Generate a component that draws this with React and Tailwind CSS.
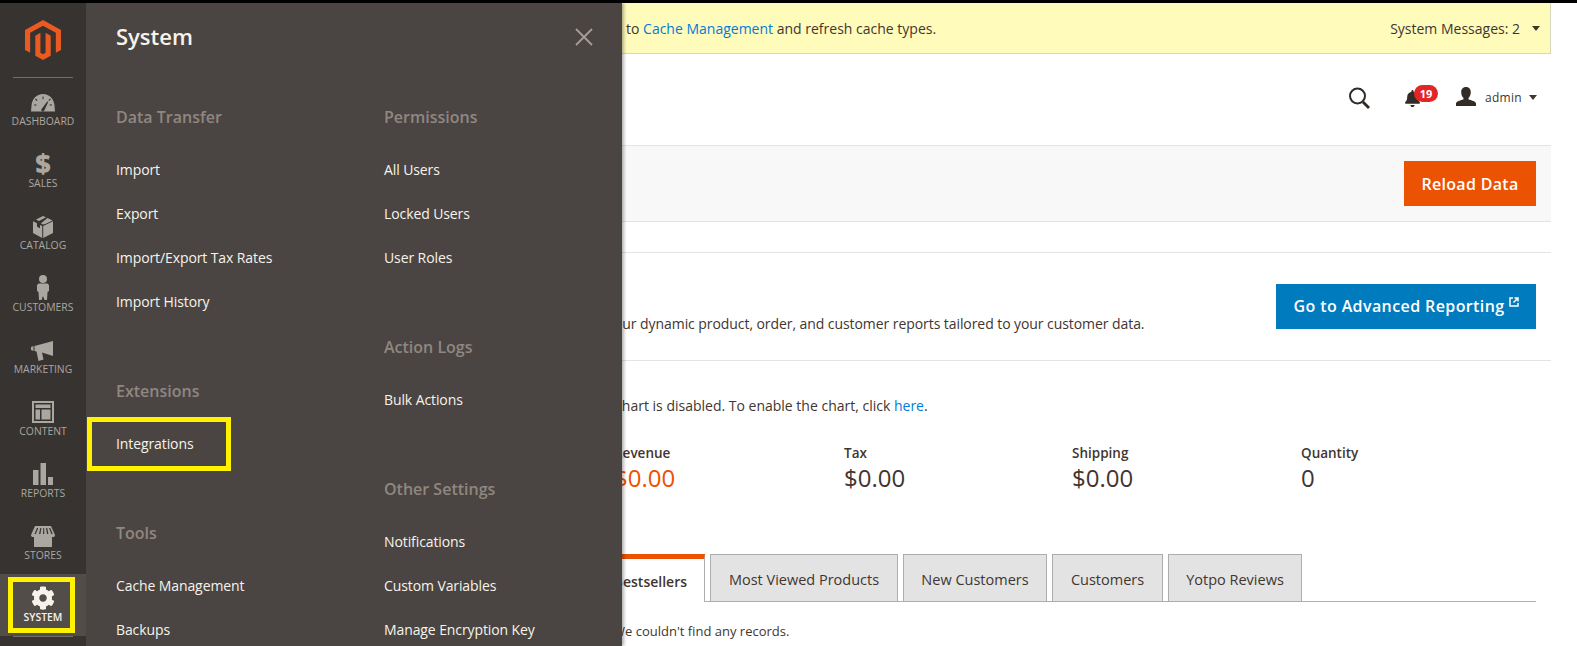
import React from "react";
import { FaCog, FaBell } from "react-icons/fa";

const font = { fontFamily: '"Open Sans", sans-serif' };

const Gauge = () => (
  <svg width="24" height="18" viewBox="0 0 24 18" fill="currentColor">
    <path fillRule="evenodd" d="M12 0C5.500 0 1 5 0.500 11.500L0 17.500h24l-.5-6C23 5 18.500 0 12 0zM5 4.500l1.500 1.800-.8.700L4 5.300zM11.500 2.500h1v2.800h-1zM19 4.500l.9.800-1.700 1.700-.8-.7zM3 10.500h2.500v1H3zM18.500 10.500H21v1h-2.500z" />
    <path d="M16.200 7.500l1 .4-3.700 8a1.600 1.600 0 1 1-2.500-1.400z" fill="#373330" />
  </svg>
);
const Dollar = () => (
  <span className="text-[27px] leading-[20px] font-extrabold -mt-[4px]" style={font}>$</span>
);
const Box = () => (
  <svg width="20" height="22" viewBox="0 0 20 22" fill="currentColor">
    <path d="M10 0l3 1.300L6 5 3 3.600zM14.500 2l5 2.400-7.200 3.500L10 8.600 8 7.600l-.2-.2zM0 5.300l4 2v3.500l3 1.500V8.900l2.200 1.200V22L0 17zM20 5.300V17l-9.800 5V10.100z" />
  </svg>
);
const Person = () => (
  <svg width="12" height="25" viewBox="0 0 12 25" fill="currentColor" className="-mt-[2px]">
    <circle cx="6" cy="4" r="4" />
    <path d="M1.500 8.500h9L12 10v6l-1.500 1-.5 8H7.500L6 21l-1.500 4H2l-.5-8L0 16v-6z" />
  </svg>
);
const Megaphone = () => (
  <svg width="24" height="20" viewBox="0 0 24 20" fill="currentColor">
    <path d="M0 6l2.500-1v5L0 9zM3.500 5L22 0v15L11 11.500l1.500 7-5 1.500-2-9.500-2-.5z" />
  </svg>
);
const Content = () => (
  <svg width="22" height="22" viewBox="0 0 22 22" fill="currentColor" className="-mt-[2px]">
    <path fillRule="evenodd" d="M0 0h22v22H0zM2 2v18h18V2zM3.500 3.500h15v3.500h-15zM3.500 8.500h4.500v10h-4.500zM9.500 8.500h9v10h-9z" />
  </svg>
);
const Bars = () => (
  <svg width="20" height="22" viewBox="0 0 20 22" fill="currentColor" className="-mt-[2px]">
    <path d="M0 7h5.500v15H0zM7.500 0H13v22H7.500zM15 14h5v8h-5z" />
  </svg>
);
const Store = () => (
  <svg width="24" height="21" viewBox="0 0 24 21" fill="currentColor">
    <path fillRule="evenodd" d="M4 0h16l4 9a2 2 0 0 1-2.500 2H21v10H3V11H2.500A2 2 0 0 1 0 9zM6 2L3.500 8h1.300L7.300 2zM9.300 2L8 8h1.400l1-6zM12.300 2l-.3 6h1.300l-.1-6zM15 2l1 6h1.400l-1.200-6zM18 2l2.400 6h1.300L19.300 2z" />
  </svg>
);

const navItems = [
  ["DASHBOARD", <Gauge />],
  ["SALES", <Dollar />],
  ["CATALOG", <Box />],
  ["CUSTOMERS", <Person />],
  ["MARKETING", <Megaphone />],
  ["CONTENT", <Content />],
  ["REPORTS", <Bars />],
  ["STORES", <Store />],
];

function Item({ children, boxed }) {
  return (
    <div className="relative h-[44px] flex items-center text-[14px] font-medium tracking-[-0.100px] text-[#f7f3eb]">
      {boxed && (
        <div className="absolute left-[-29px] top-[-4px] w-[144px] h-[54px] border-[5px] border-[#fff200]" />
      )}
      {children}
    </div>
  );
}

function Heading({ children }) {
  return (
    <div className="h-[44px] mb-[8px] flex items-center text-[16px] font-semibold text-[#8f8780]">
      {children}
    </div>
  );
}

function Tab({ children, width }) {
  return (
    <div
      className={`${width} h-[48px] pt-[3px] flex items-center justify-center mr-[5px] bg-[#e3e3e3] border-[1px] border-[#adadad] text-[14.500px] text-[#41362f]`}
    >
      {children}
    </div>
  );
}

function Stat({ label, value, accent, width }) {
  return (
    <div className={`${width} shrink-0`}>
      <div className="h-[20px] leading-[20px] text-[13.500px] font-semibold text-[#41362f]">{label}</div>
      <div className={`h-[30px] leading-[30px] text-[24px] ${accent ? "text-[#eb5202]" : "text-[#41362f]"}`}>
        {value}
      </div>
    </div>
  );
}

export default function App() {
  return (
    <div className="relative w-[1577px] h-[646px] overflow-hidden bg-white flex flex-col" style={font}>
      <div className="h-[3px] bg-black shrink-0" />
      <div className="flex flex-1 min-h-0">
        <aside className="w-[86px] shrink-0 bg-[#373330] flex flex-col">
          <div className="h-[75px] shrink-0 flex flex-col items-center">
            <svg className="mt-[17px]" width="36" height="40" viewBox="1.600 0 20.800 24" fill="#eb5a20" preserveAspectRatio="none">
              <path d="M12 24l-4.455-2.572v-12l2.970-1.715v12.001l1.485.902 1.485-.902V7.713l2.971 1.715v12L12 24zM22.391 6v12l-2.969 1.714V7.713L12 3.430 4.574 7.713v12.001L1.609 18V6L12 0l10.391 6z" />
            </svg>
            <div className="mt-auto w-[60px] h-px bg-[#736e69]" />
          </div>
          {navItems.map(([label, icon]) => (
            <div key={label} className="h-[62px] shrink-0 pt-[12px] flex flex-col items-center text-[#aaa6a0]">
              <div className="h-[25px] flex items-center justify-center">{icon}</div>
              <div className="h-[12px] leading-[12px] text-[10.400px]">{label}</div>
            </div>
          ))}
          <div className="relative h-[62px] shrink-0 pt-[11px] bg-[#524d49] flex flex-col items-center text-[#f7f3eb]">
            <div className="h-[25px] flex items-center justify-center">
              <FaCog size={24} />
            </div>
            <div className="h-[12px] mt-[1px] leading-[12px] text-[10.400px] font-semibold">SYSTEM</div>
            <div className="absolute left-[8px] top-[3px] w-[67px] h-[56px] border-[5px] border-[#fff200]" />
          </div>
          <div className="w-[60px] h-px bg-[#736e69] mx-auto" />
        </aside>

        <main className="flex-1 min-w-0 pr-[26px]">
          <div className="h-[51px] bg-[#fffbbb] border-b border-r border-[#d6d6c0] flex items-center pl-[540px] pr-[10px] text-[14px] text-[#41362f]">
            <span>
              to <span className="text-[#007bdb]">Cache Management</span> and refresh cache types.
            </span>
            <span className="ml-auto mr-[12px]">System Messages: 2</span>
            <span className="w-0 h-0 border-x-[4px] border-x-transparent border-t-[5px] border-t-[#41362f]" />
          </div>

          <div className="h-[91px] flex items-center justify-end pr-[14px] pb-[4px] text-[#41362f]">
            <svg width="24" height="24" viewBox="0 0 24 24" fill="none" stroke="#2f2a26" strokeWidth="2" className="mr-[33px]">
              <circle cx="10.500" cy="10" r="7.500" />
              <path d="M16 16l6 6" strokeWidth="2.800" />
            </svg>
            <div className="relative w-[18px] h-[20px] mr-[34px]">
              <FaBell size={17} className="mt-[2px]" color="#332b26" />
              <div className="absolute left-[10px] top-[-3px] w-[24px] h-[17px] rounded-full bg-[#e22626] text-white text-[11px] leading-[17px] font-bold text-center">
                19
              </div>
            </div>
            <svg width="20" height="19" viewBox="0 0 20 19" fill="#332b26" className="mr-[9px] mb-[2px]">
              <path d="M10 0c3 0 4.800 2.200 4.800 5.200 0 2.500-1 4.600-2.300 5.700v1.300c2.700 1 7 2 7.500 4V19H0v-2.800c.5-2 4.800-3 7.500-4v-1.300C6.200 9.800 5.200 7.700 5.200 5.200 5.200 2.200 7 0 10 0z" />
            </svg>
            <span className="text-[12px] mr-[7px] tracking-[0.300px]">admin</span>
            <span className="w-0 h-0 border-x-[4px] border-x-transparent border-t-[5px] border-t-[#41362f]" />
          </div>

          <div className="h-[77px] bg-[#f8f8f8] border-y border-[#e3e3e3] flex items-center justify-end pr-[15px]">
            <div className="w-[132px] h-[45px] bg-[#eb5202] text-white text-[16px] font-semibold tracking-[0.300px] flex items-center justify-center">
              Reload Data
            </div>
          </div>

          <div className="mt-[30px] h-[109px] border-y border-[#e3e3e3] flex pr-[15px]">
            <div className="pl-[528px] pt-[59px] text-[14px] leading-[24px] tracking-[-0.070px] text-[#41362f]">
              our dynamic product, order, and customer reports tailored to your customer data.
            </div>
            <div className="ml-auto mt-[31px] pb-[2px] w-[260px] h-[45px] bg-[#007bbd] text-white text-[16px] tracking-[0.400px] font-semibold flex items-center justify-center self-start">
              Go to Advanced Reporting
              <svg className="ml-[4px] mb-[8px]" width="10" height="10" viewBox="0 0 10 10" fill="none" stroke="white" strokeWidth="1.500">
                <path d="M4 1H1v8h8V6M5.500 1H9v3.500M9 1L4.500 5.500" />
              </svg>
            </div>
          </div>

          <div className="pl-[527px] mt-[35px] h-[20px] leading-[20px] text-[14px] text-[#41362f]">
            Chart is disabled. To enable the chart, click <span className="text-[#007bdb]">here</span>.
          </div>

          <div className="pl-[528px] mt-[27px] flex">
            <Stat width="w-[230px]" label="Revenue" value="$0.00" accent />
            <Stat width="w-[228px]" label="Tax" value="$0.00" />
            <Stat width="w-[229px]" label="Shipping" value="$0.00" />
            <Stat width="w-[228px]" label="Quantity" value="0" />
          </div>

          <div className="mt-[61px] mr-[15px] pl-[515px] h-[48px] flex items-start border-b border-[#adadad]">
            <div className="w-[104px] h-[48px] mr-[5px] pt-[1px] bg-white border-t-[5px] border-t-[#eb5202] border-r border-r-[#adadad] flex items-center justify-end pr-[17px] text-[14px] font-semibold text-[#41362f]">
              Bestsellers
            </div>
            <Tab width="w-[188px]">Most Viewed Products</Tab>
            <Tab width="w-[144px]">New Customers</Tab>
            <Tab width="w-[111px]">Customers</Tab>
            <Tab width="w-[134px]">Yotpo Reviews</Tab>
          </div>

          <div className="pl-[527px] mt-[19px] h-[20px] leading-[20px] text-[13px] text-[#41362f]">
            We couldn't find any records.
          </div>
        </main>
      </div>

      <div className="absolute left-[86px] top-[3px] bottom-0 w-[536px] bg-[#4a4542] shadow-[2px_0_3px_rgba(0,0,0,0.3)] pl-[30px]">
        <div className="h-[66px] flex items-center text-[22px] font-semibold text-[#f7f3eb]">System</div>
        <svg className="absolute left-[489px] top-[25px]" width="18" height="18" viewBox="0 0 18 18" stroke="#a79d95" strokeWidth="1.800" fill="none">
          <path d="M1 1l16 16M17 1L1 17" />
        </svg>
        <div className="flex mt-[26px]">
          <div className="w-[268px] shrink-0">
            <Heading>Data Transfer</Heading>
            <Item>Import</Item>
            <Item>Export</Item>
            <Item>Import/Export Tax Rates</Item>
            <Item>Import History</Item>
            <div className="h-[46px]" />
            <Heading>Extensions</Heading>
            <Item boxed>Integrations</Item>
            <div className="h-[46px]" />
            <Heading>Tools</Heading>
            <Item>Cache Management</Item>
            <Item>Backups</Item>
          </div>
          <div>
            <Heading>Permissions</Heading>
            <Item>All Users</Item>
            <Item>Locked Users</Item>
            <Item>User Roles</Item>
            <div className="h-[46px]" />
            <Heading>Action Logs</Heading>
            <Item>Bulk Actions</Item>
            <div className="h-[46px]" />
            <Heading>Other Settings</Heading>
            <Item>Notifications</Item>
            <Item>Custom Variables</Item>
            <Item>Manage Encryption Key</Item>
          </div>
        </div>
      </div>
    </div>
  );
}
